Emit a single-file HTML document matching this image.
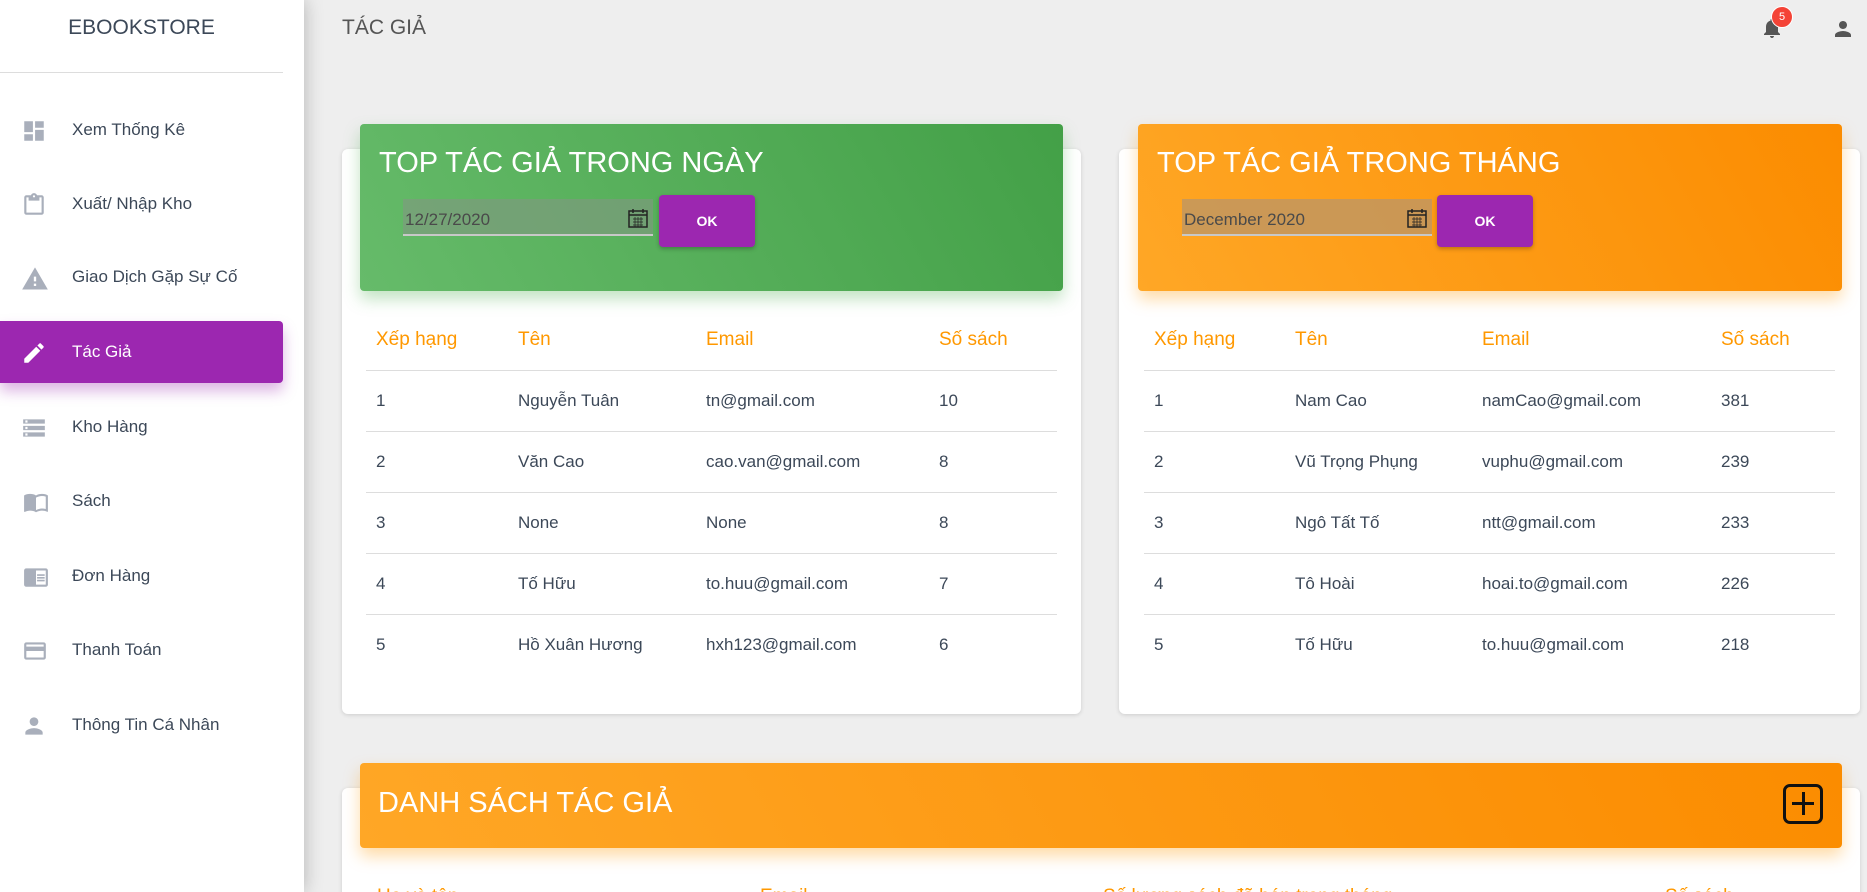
<!DOCTYPE html>
<html style="width:1867px;height:892px;overflow:hidden"><head><meta charset="utf-8"><style>
*{box-sizing:border-box;margin:0;padding:0}
body{width:1867px;height:892px;overflow:hidden;background:#eeeeee;font-family:"Liberation Sans","Noto Sans CJK SC",sans-serif;position:relative;color:#3c4858}
.wrap{position:absolute;left:0;top:0;width:1867px;height:892px;overflow:hidden}
.abs{position:absolute}
.sidebar{left:0;top:0;width:304px;height:892px;background:#fff;box-shadow:0 0 18px rgba(0,0,0,.25);z-index:2}
.brand{left:0;width:283px;top:16px;text-align:center;font-size:21px;color:#3c4858}
.divider{left:0;top:72px;width:283px;height:1px;background:#ddd}
.nav{left:0;width:283px;height:62px;font-size:17px;color:#3c4858}
.nav span{position:absolute;left:72px;top:21px}
.nav svg{position:absolute;left:21px;top:19px}
.active{background:#9c27b0;color:#fff;border-radius:0 4px 4px 0;box-shadow:0 8px 14px rgba(156,39,176,.35)}
.card{background:#fff;border-radius:6px;box-shadow:0 1px 4px rgba(0,0,0,.14)}
.hdr{border-radius:4px;color:#fff}
.green{background:linear-gradient(60deg,#66bb6a,#43a047);box-shadow:0 8px 16px rgba(76,175,80,.35)}
.orange{background:linear-gradient(60deg,#ffa726,#fb8c00);box-shadow:0 8px 16px rgba(255,152,0,.35)}
.title{font-size:29px;font-weight:300}
.inp{height:37px;border-bottom:2px solid #c8c8c8;font-size:17px;color:#4a4a4a;padding:11px 2px 0}
.ok{width:96px;height:52px;background:#9c27b0;border-radius:4px;color:#fff;font-size:14px;font-weight:bold;text-align:center;line-height:52px;box-shadow:0 2px 4px rgba(0,0,0,.25)}
.th{font-size:19px;color:#ff9800}
.td{font-size:17px;color:#3c4858}
.line{height:1px;background:#ddd}
</style></head><body><div class="wrap">
<div class="abs sidebar">
<div class="abs brand">EBOOKSTORE</div>
<div class="abs divider"></div>
<div class="abs nav" style="top:99px"><svg width="26" height="26" viewBox="0 0 24 24" fill="#a9afbb"><path d="M3 13h8V3H3v10zm0 8h8v-6H3v6zm10 0h8V11h-8v10zm0-18v6h8V3h-8z"/></svg><span>Xem Thống Kê</span></div>
<div class="abs nav" style="top:173px"><svg width="26" height="26" viewBox="0 0 24 24" fill="#a9afbb"><path d="M19 3h-4.2C14.4 1.8 13.3 1 12 1s-2.4.8-2.8 2H5c-1.1 0-2 .9-2 2v14c0 1.1.9 2 2 2h14c1.1 0 2-.9 2-2V5c0-1.1-.9-2-2-2zm-7 0c.6 0 1 .4 1 1s-.4 1-1 1-1-.4-1-1 .4-1 1-1zm7 16H5V5h2v3h10V5h2v14z"/></svg><span>Xuất/ Nhập Kho</span></div>
<div class="abs nav" style="top:246px"><svg width="28" height="28" viewBox="0 0 24 24" fill="#a9afbb"><path d="M1 21h22L12 2 1 21zm12-3h-2v-2h2v2zm0-4h-2v-4h2v4z"/></svg><span>Giao Dịch Gặp Sự Cố</span></div>
<div class="abs nav active" style="top:321px"><svg width="26" height="26" viewBox="0 0 24 24" fill="#fff"><path d="M3 17.25V21h3.75L17.81 9.94l-3.75-3.75L3 17.25zM20.71 7.04a1 1 0 000-1.41l-2.34-2.34a1 1 0 00-1.41 0l-1.83 1.830 3.75 3.75 1.83-1.83z"/></svg><span>Tác Giả</span></div>
<div class="abs nav" style="top:396px"><svg width="26" height="26" viewBox="0 0 24 24" fill="#a9afbb"><path d="M2 20h20v-4H2v4zm2-3h2v2H4v-2zM2 4v4h20V4H2zm4 3H4V5h2v2zm-4 7h20v-4H2v4zm2-3h2v2H4v-2z"/></svg><span>Kho Hàng</span></div>
<div class="abs nav" style="top:470px"><svg width="30" height="26" viewBox="0 0 24 24" fill="#a9afbb"><path d="M21 5c-1.1-.35-2.3-.5-3.5-.5-1.95 0-4.050.4-5.5 1.5-1.45-1.1-3.55-1.5-5.5-1.5S2.45 4.9 1 6v14.65c0 .25.25.5.5.5.1 0 .15-.05.25-.05C3.1 20.45 5.05 20 6.5 20c1.95 0 4.05.4 5.5 1.5 1.35-.85 3.8-1.5 5.5-1.5 1.65 0 3.35.3 4.75 1.05.1.05.15.05.25.05.25 0 .5-.25.5-.5V6c-.6-.45-1.25-.75-2-1zm0 13.5c-1.1-.35-2.3-.5-3.5-.5-1.7 0-4.15.65-5.5 1.5V8c1.35-.85 3.8-1.5 5.5-1.5 1.2 0 2.4.15 3.5.5v11.5z"/></svg><span>Sách</span></div>
<div class="abs nav" style="top:545px"><svg width="30" height="26" viewBox="0 0 24 24" fill="#a9afbb"><path d="M21 4H3c-1.1 0-2 .9-2 2v13c0 1.1.9 2 2 2h18c1.1 0 2-.9 2-2V6c0-1.1-.9-2-2-2zm0 15h-9V6h9v13zm-8-9.5h7V11h-7zm0 2.5h7v1.5h-7zm0 2.5h7V16h-7z"/></svg><span>Đơn Hàng</span></div>
<div class="abs nav" style="top:619px"><svg width="28" height="26" viewBox="0 0 24 24" fill="#a9afbb"><path d="M20 4H4c-1.11 0-2 .89-2 2v12c0 1.11.89 2 2 2h16c1.11 0 2-.89 2-2V6c0-1.11-.89-2-2-2zm0 14H4v-6h16v6zm0-10H4V6h16v2z"/></svg><span>Thanh Toán</span></div>
<div class="abs nav" style="top:694px"><svg width="26" height="26" viewBox="0 0 24 24" fill="#a9afbb"><path d="M12 12c2.21 0 4-1.79 4-4s-1.79-4-4-4-4 1.79-4 4 1.79 4 4 4zm0 2c-2.67 0-8 1.34-8 4v2h16v-2c0-2.66-5.33-4-8-4z"/></svg><span>Thông Tin Cá Nhân</span></div>
</div>

<div class="abs" style="left:342px;top:16px;font-size:21px;color:#555">TÁC GIẢ</div>
<svg class="abs" style="left:1760px;top:16px" width="24" height="24" viewBox="0 0 24 24" fill="#555"><path d="M12 22c1.1 0 2-.9 2-2h-4c0 1.1.89 2 2 2zm6-6v-5c0-3.07-1.64-5.64-4.5-6.32V4c0-.83-.67-1.5-1.5-1.5s-1.5.67-1.5 1.5v.68C7.63 5.36 6 7.92 6 11v5l-2 2v1h16v-1l-2-2z"/></svg>
<div class="abs" style="left:1771px;top:6px;width:22px;height:22px;border-radius:11px;background:#f44336;border:1px solid #fff;color:#fff;font-size:11px;text-align:center;line-height:20px">5</div>
<svg class="abs" style="left:1831px;top:17px" width="24" height="24" viewBox="0 0 24 24" fill="#555"><path d="M12 12c2.21 0 4-1.79 4-4s-1.79-4-4-4-4 1.79-4 4 1.79 4 4 4zm0 2c-2.67 0-8 1.34-8 4v2h16v-2c0-2.66-5.33-4-8-4z"/></svg>

<div class="abs card" style="left:342px;top:149px;width:739px;height:565px"></div>
<div class="abs hdr green" style="left:360px;top:124px;width:703px;height:167px"></div>
<div class="abs title" style="left:379px;top:147px;color:#fff">TOP TÁC GIẢ TRONG NGÀY</div>
<div class="abs inp" style="left:403px;top:199px;width:250px;background:rgba(130,150,130,.6)">12/27/2020</div>
<svg class="abs" style="left:627px;top:207px" width="22" height="22" viewBox="0 0 22 22" fill="none" stroke="#222" stroke-width="1.5"><rect x="2" y="4" width="18" height="16"/><path d="M2 8h18M6 2v4M16 2v4"/><path d="M6 12h10M6 15h10M6 18h10M8 10v10M11 10v10M14 10v10" stroke-width=".7"/></svg>
<div class="abs ok" style="left:659px;top:195px">OK</div>
<div class="abs th" style="left:376px;top:329px">Xếp hạng</div><div class="abs th" style="left:518px;top:329px">Tên</div><div class="abs th" style="left:706px;top:329px">Email</div><div class="abs th" style="left:939px;top:329px">Số sách</div>
<div class="abs line" style="left:366px;top:370px;width:691px"></div>
<div class="abs line" style="left:366px;top:431px;width:691px"></div>
<div class="abs line" style="left:366px;top:492px;width:691px"></div>
<div class="abs line" style="left:366px;top:553px;width:691px"></div>
<div class="abs line" style="left:366px;top:614px;width:691px"></div>
<div class="abs td" style="left:376px;top:391px">1</div><div class="abs td" style="left:518px;top:391px">Nguyễn Tuân</div><div class="abs td" style="left:706px;top:391px">tn@gmail.com</div><div class="abs td" style="left:939px;top:391px">10</div>
<div class="abs td" style="left:376px;top:452px">2</div><div class="abs td" style="left:518px;top:452px">Văn Cao</div><div class="abs td" style="left:706px;top:452px">cao.van@gmail.com</div><div class="abs td" style="left:939px;top:452px">8</div>
<div class="abs td" style="left:376px;top:513px">3</div><div class="abs td" style="left:518px;top:513px">None</div><div class="abs td" style="left:706px;top:513px">None</div><div class="abs td" style="left:939px;top:513px">8</div>
<div class="abs td" style="left:376px;top:574px">4</div><div class="abs td" style="left:518px;top:574px">Tố Hữu</div><div class="abs td" style="left:706px;top:574px">to.huu@gmail.com</div><div class="abs td" style="left:939px;top:574px">7</div>
<div class="abs td" style="left:376px;top:635px">5</div><div class="abs td" style="left:518px;top:635px">Hồ Xuân Hương</div><div class="abs td" style="left:706px;top:635px">hxh123@gmail.com</div><div class="abs td" style="left:939px;top:635px">6</div>

<div class="abs card" style="left:1119px;top:149px;width:741px;height:565px"></div>
<div class="abs hdr orange" style="left:1138px;top:124px;width:704px;height:167px"></div>
<div class="abs title" style="left:1157px;top:147px;color:#fff">TOP TÁC GIẢ TRONG THÁNG</div>
<div class="abs inp" style="left:1182px;top:199px;width:250px;background:rgba(190,150,100,.8)">December  2020</div>
<svg class="abs" style="left:1406px;top:207px" width="22" height="22" viewBox="0 0 22 22" fill="none" stroke="#222" stroke-width="1.5"><rect x="2" y="4" width="18" height="16"/><path d="M2 8h18M6 2v4M16 2v4"/><path d="M6 12h10M6 15h10M6 18h10M8 10v10M11 10v10M14 10v10" stroke-width=".7"/></svg>
<div class="abs ok" style="left:1437px;top:195px">OK</div>
<div class="abs th" style="left:1154px;top:329px">Xếp hạng</div><div class="abs th" style="left:1295px;top:329px">Tên</div><div class="abs th" style="left:1482px;top:329px">Email</div><div class="abs th" style="left:1721px;top:329px">Số sách</div>
<div class="abs line" style="left:1144px;top:370px;width:691px"></div>
<div class="abs line" style="left:1144px;top:431px;width:691px"></div>
<div class="abs line" style="left:1144px;top:492px;width:691px"></div>
<div class="abs line" style="left:1144px;top:553px;width:691px"></div>
<div class="abs line" style="left:1144px;top:614px;width:691px"></div>
<div class="abs td" style="left:1154px;top:391px">1</div><div class="abs td" style="left:1295px;top:391px">Nam Cao</div><div class="abs td" style="left:1482px;top:391px">namCao@gmail.com</div><div class="abs td" style="left:1721px;top:391px">381</div>
<div class="abs td" style="left:1154px;top:452px">2</div><div class="abs td" style="left:1295px;top:452px">Vũ Trọng Phụng</div><div class="abs td" style="left:1482px;top:452px">vuphu@gmail.com</div><div class="abs td" style="left:1721px;top:452px">239</div>
<div class="abs td" style="left:1154px;top:513px">3</div><div class="abs td" style="left:1295px;top:513px">Ngô Tất Tố</div><div class="abs td" style="left:1482px;top:513px">ntt@gmail.com</div><div class="abs td" style="left:1721px;top:513px">233</div>
<div class="abs td" style="left:1154px;top:574px">4</div><div class="abs td" style="left:1295px;top:574px">Tô Hoài</div><div class="abs td" style="left:1482px;top:574px">hoai.to@gmail.com</div><div class="abs td" style="left:1721px;top:574px">226</div>
<div class="abs td" style="left:1154px;top:635px">5</div><div class="abs td" style="left:1295px;top:635px">Tố Hữu</div><div class="abs td" style="left:1482px;top:635px">to.huu@gmail.com</div><div class="abs td" style="left:1721px;top:635px">218</div>

<div class="abs card" style="left:342px;top:788px;width:1518px;height:110px"></div>
<div class="abs hdr orange" style="left:360px;top:763px;width:1482px;height:85px"></div>
<div class="abs title" style="left:378px;top:787px;color:#fff">DANH SÁCH TÁC GIẢ</div>
<div class="abs" style="left:1783px;top:784px;width:40px;height:40px;border:3px solid #111;border-radius:7px"></div>
<div class="abs" style="left:1792px;top:802px;width:22px;height:3px;background:#111"></div>
<div class="abs" style="left:1802px;top:792px;width:3px;height:23px;background:#111"></div>
<div class="abs th" style="left:377px;top:886px">Họ và tên</div>
<div class="abs th" style="left:760px;top:886px">Email</div>
<div class="abs th" style="left:1103px;top:886px">Số lượng sách đã bán trong tháng</div>
<div class="abs th" style="left:1665px;top:886px">Số sách</div>
</div></body></html>
